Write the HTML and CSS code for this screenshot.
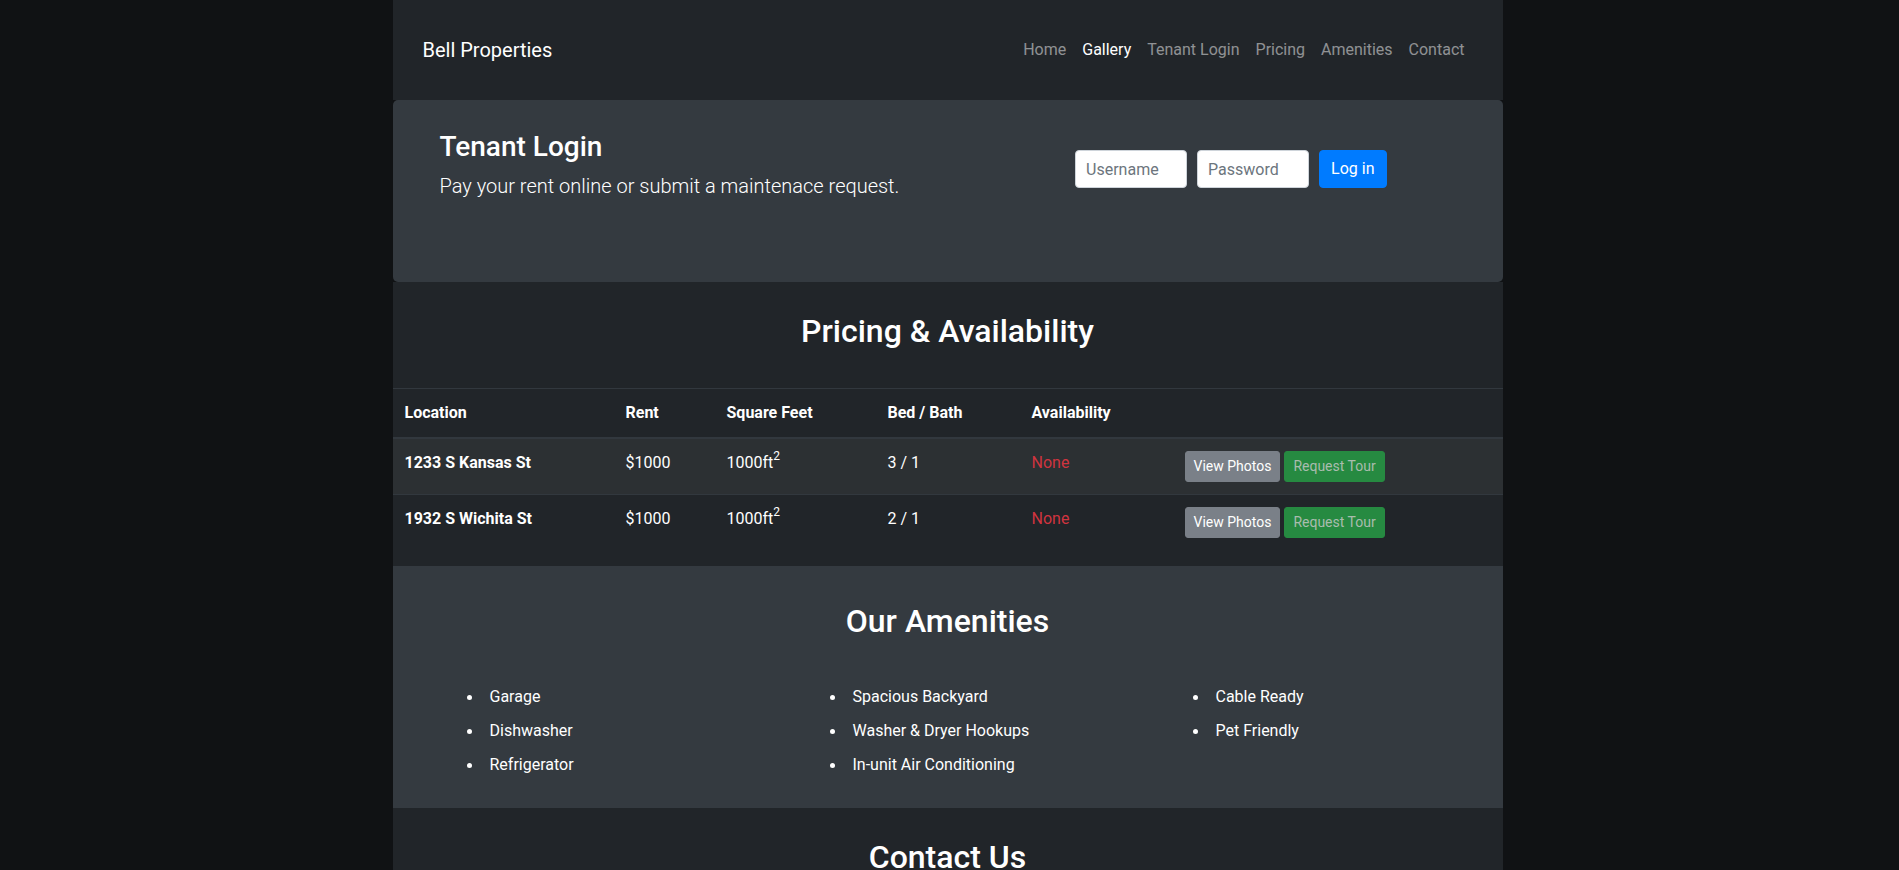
FILE: index.html
```html
<!DOCTYPE html>
<html lang="en">
<head>
<meta charset="utf-8">
<title>Bell Properties</title>
<link rel="stylesheet" href="styles.css">
</head>
<body>
<div class="page">
  <nav class="navbar">
    <a class="brand" href="#">Bell Properties</a>
    <ul class="nav-links">
      <li><a href="#">Home</a></li>
      <li><a class="active" href="#">Gallery</a></li>
      <li><a href="#">Tenant Login</a></li>
      <li><a href="#">Pricing</a></li>
      <li><a href="#">Amenities</a></li>
      <li><a href="#">Contact</a></li>
    </ul>
  </nav>

  <section class="jumbotron">
    <div class="jumbo-text">
      <h3 class="jumbo-title">Tenant Login</h3>
      <p class="lead">Pay your rent online or submit a maintenace request.</p>
    </div>
    <form class="login-form">
      <input class="form-input" type="text" placeholder="Username">
      <input class="form-input" type="password" placeholder="Password">
      <button class="btn btn-primary" type="button">Log in</button>
    </form>
  </section>

  <section class="pricing">
    <h2 class="section-title">Pricing &amp; Availability</h2>
    <table class="table">
      <colgroup>
        <col class="c-loc"><col class="c-rent"><col class="c-sq"><col class="c-bed"><col class="c-av"><col class="c-act">
      </colgroup>
      <thead>
        <tr><th>Location</th><th>Rent</th><th>Square Feet</th><th>Bed / Bath</th><th>Availability</th><th></th></tr>
      </thead>
      <tbody>
        <tr class="striped">
          <th>1233 S Kansas St</th><td>$1000</td><td>1000ft<sup>2</sup></td><td>3 / 1</td><td class="danger">None</td>
          <td><button class="btn btn-sm btn-secondary" type="button">View Photos</button> <button class="btn btn-sm btn-success" type="button">Request Tour</button></td>
        </tr>
        <tr>
          <th>1932 S Wichita St</th><td>$1000</td><td>1000ft<sup>2</sup></td><td>2 / 1</td><td class="danger">None</td>
          <td><button class="btn btn-sm btn-secondary" type="button">View Photos</button> <button class="btn btn-sm btn-success" type="button">Request Tour</button></td>
        </tr>
      </tbody>
    </table>
  </section>

  <section class="amenities">
    <h2 class="section-title amen-title">Our Amenities</h2>
    <div class="amen-grid">
      <ul class="amen-list">
        <li>Garage</li>
        <li>Dishwasher</li>
        <li>Refrigerator</li>
      </ul>
      <ul class="amen-list">
        <li>Spacious Backyard</li>
        <li>Washer &amp; Dryer Hookups</li>
        <li>In-unit Air Conditioning</li>
      </ul>
      <ul class="amen-list">
        <li>Cable Ready</li>
        <li>Pet Friendly</li>
      </ul>
    </div>
  </section>

  <section class="contact">
    <h2 class="section-title">Contact Us</h2>
  </section>
</div>
</body>
</html>
```

FILE: styles.css
```css
* { box-sizing: border-box; }

html, body {
  margin: 0;
  padding: 0;
}

body {
  background: #101214;
  color: #ffffff;
  font-family: Roboto, "Liberation Sans", Arial, sans-serif;
  font-size: 16px;
  line-height: 1.5;
  height: 870px;
  overflow: hidden;
}

.page {
  width: 1110px;
  margin: 0 auto;
  position: relative;
  left: -2px;
}

/* Navbar */
.navbar {
  background: #212529;
  height: 100px;
  display: flex;
  align-items: center;
  justify-content: space-between;
  padding: 0 30px 0 30px;
}

.brand {
  color: #ffffff;
  text-decoration: none;
  font-size: 20px;
  line-height: 30px;
}

.nav-links {
  list-style: none;
  display: flex;
  margin: 0;
  padding: 0;
}

.nav-links a {
  display: block;
  padding: 8px 8px;
  color: rgba(255, 255, 255, 0.5);
  text-decoration: none;
  font-size: 16px;
  line-height: 24px;
}

.nav-links a.active {
  color: #ffffff;
}

/* Jumbotron */
.jumbotron {
  background: #343a40;
  border-radius: 5px;
  padding: 30px 116px 65px 47px;
  display: flex;
  justify-content: space-between;
  align-items: flex-start;
}

.jumbo-title {
  margin: 0 0 7px;
  font-size: 28px;
  font-weight: 500;
  line-height: 1.2;
}

.lead {
  margin: 0 0 16px;
  font-size: 20px;
  font-weight: 300;
  line-height: 1.5;
}

.login-form {
  display: flex;
  gap: 10px;
  margin-top: 20px;
}

.form-input {
  width: 112px;
  height: 38px;
  padding: 6px 10px;
  border: 1px solid #ced4da;
  border-radius: 4px;
  background: #ffffff;
  font-family: inherit;
  font-size: 16px;
  color: #495057;
}

.form-input::placeholder {
  color: #6c757d;
}

.btn {
  font-family: inherit;
  border: 1px solid transparent;
  cursor: pointer;
}

.btn-primary {
  height: 38px;
  padding: 6px 11px;
  font-size: 16px;
  line-height: 24px;
  border-radius: 4px;
  background: #007bff;
  border-color: #007bff;
  color: #ffffff;
}

/* Sections */
.section-title {
  margin: 0;
  text-align: center;
  font-size: 32px;
  font-weight: 500;
  line-height: 1.2;
}

.pricing {
  background: #212529;
  padding: 30.5px 0 16px;
}

.pricing .section-title {
  margin-bottom: 37.3px;
}

.table {
  width: 100%;
  border-collapse: collapse;
  table-layout: fixed;
  margin: 0;
  color: #ffffff;
}

.c-loc { width: 221px; }
.c-rent { width: 101px; }
.c-sq { width: 161px; }
.c-bed { width: 144px; }
.c-av { width: 153px; }

.table th,
.table td {
  padding: 12px;
  text-align: left;
  vertical-align: top;
  border-top: 1px solid #32383e;
  font-size: 16px;
  line-height: 24px;
}

.table th {
  font-weight: 700;
}

.table td {
  font-weight: 400;
}

.table thead th {
  border-bottom: 2px solid #32383e;
}

.table tr.striped {
  background: rgba(255, 255, 255, 0.05);
}

.table sup {
  font-size: 12px;
  line-height: 0;
  position: relative;
  top: -1px;
}

.danger {
  color: #d0343f;
}

.table td:last-child {
  white-space: nowrap;
}

.btn-sm {
  height: 31px;
  padding: 4px 8px;
  font-size: 14px;
  line-height: 21px;
  border-radius: 3px;
}

.btn-secondary {
  background: #7a8088;
  border-color: #7a8088;
  color: #ffffff;
}

.btn-success {
  background: #268a41;
  border-color: #268a41;
  color: #a9bcae;
}

/* Amenities */
.amenities {
  background: #343a40;
  padding: 36px 0 30.5px 74px;
}

.amen-title {
  margin-left: -74px;
  margin-bottom: 45px;
}

.amen-grid {
  display: grid;
  grid-template-columns: 363px 363px 1fr;
}

.amen-list {
  margin: 0;
  padding: 0;
  list-style: none;
}

.amen-list li {
  line-height: 24px;
  margin-bottom: 10px;
}

.amen-list li::before {
  content: "";
  display: inline-block;
  width: 5px;
  height: 5px;
  border-radius: 50%;
  background: #ffffff;
  margin-right: 18px;
  vertical-align: middle;
}

.amen-list li:last-child {
  margin-bottom: 0;
}

/* Contact */
.contact {
  background: #212529;
  padding-top: 30px;
  height: 200px;
}
```
